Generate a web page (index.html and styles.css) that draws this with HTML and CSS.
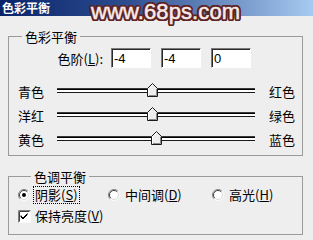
FILE: index.html
```html
<!DOCTYPE html>
<html>
<head>
<meta charset="utf-8">
<link rel="stylesheet" href="styles.css">
</head>
<body>
<div class="window">
  <div class="titlebar"><span class="title">色彩平衡</span></div>
  <div class="watermark">www.68ps.com</div>
  <div class="dialog">
    <fieldset class="group group-color">
      <legend>色彩平衡</legend>
      <div class="levels">
        <label class="levels-label">色阶(<u>L</u>):</label>
        <input class="field" type="text" value="-4">
        <input class="field" type="text" value="-4">
        <input class="field" type="text" value="0">
      </div>
      <div class="slider-row">
        <span class="lbl">青色</span>
        <div class="track"><span class="thumb" style="left:48%"><svg width="11" height="14" viewBox="0 0 11 14"><polygon points="0.5,5.5 5.5,0.5 10.5,5.5 10.5,13.5 0.5,13.5" fill="#ededed" stroke="#1a1a1a"/><polyline points="1.5,12.5 1.5,5.9 5.5,1.9" fill="none" stroke="#fff"/><polyline points="2,12.5 9.5,12.5 9.5,5.9" fill="none" stroke="#8a8a8a"/></svg></span></div>
        <span class="lbl">红色</span>
      </div>
      <div class="slider-row">
        <span class="lbl">洋红</span>
        <div class="track"><span class="thumb" style="left:48%"><svg width="11" height="14" viewBox="0 0 11 14"><polygon points="0.5,5.5 5.5,0.5 10.5,5.5 10.5,13.5 0.5,13.5" fill="#ededed" stroke="#1a1a1a"/><polyline points="1.5,12.5 1.5,5.9 5.5,1.9" fill="none" stroke="#fff"/><polyline points="2,12.5 9.5,12.5 9.5,5.9" fill="none" stroke="#8a8a8a"/></svg></span></div>
        <span class="lbl">绿色</span>
      </div>
      <div class="slider-row">
        <span class="lbl">黄色</span>
        <div class="track"><span class="thumb" style="left:50%"><svg width="11" height="14" viewBox="0 0 11 14"><polygon points="0.5,5.5 5.5,0.5 10.5,5.5 10.5,13.5 0.5,13.5" fill="#ededed" stroke="#1a1a1a"/><polyline points="1.5,12.5 1.5,5.9 5.5,1.9" fill="none" stroke="#fff"/><polyline points="2,12.5 9.5,12.5 9.5,5.9" fill="none" stroke="#8a8a8a"/></svg></span></div>
        <span class="lbl">蓝色</span>
      </div>
    </fieldset>

    <fieldset class="group group-tone">
      <legend>色调平衡</legend>
      <div class="radios">
        <label class="opt">
          <svg class="radio" width="12" height="12" viewBox="0 0 12 12"><circle cx="6" cy="6" r="5.5" fill="#fff"/><path d="M2.1,9.9 A5.5,5.5 0 0 1 9.9,2.1" fill="none" stroke="#808080"/><path d="M2.8,9.2 A4.5,4.5 0 0 1 9.2,2.8" fill="none" stroke="#404040"/><path d="M9.9,2.1 A5.5,5.5 0 0 1 2.1,9.9" fill="none" stroke="#fafafa"/><path d="M9.2,2.8 A4.5,4.5 0 0 1 2.8,9.2" fill="none" stroke="#d8d8d8"/><circle cx="6" cy="6" r="2" fill="#000"/></svg>
          <span class="focus">阴影(<u>S</u>)</span>
        </label>
        <label class="opt">
          <svg class="radio" width="12" height="12" viewBox="0 0 12 12"><circle cx="6" cy="6" r="5.5" fill="#fff"/><path d="M2.1,9.9 A5.5,5.5 0 0 1 9.9,2.1" fill="none" stroke="#808080"/><path d="M2.8,9.2 A4.5,4.5 0 0 1 9.2,2.8" fill="none" stroke="#404040"/><path d="M9.9,2.1 A5.5,5.5 0 0 1 2.1,9.9" fill="none" stroke="#fafafa"/><path d="M9.2,2.8 A4.5,4.5 0 0 1 2.8,9.2" fill="none" stroke="#d8d8d8"/></svg>
          <span class="txt">中间调(<u>D</u>)</span>
        </label>
        <label class="opt">
          <svg class="radio" width="12" height="12" viewBox="0 0 12 12"><circle cx="6" cy="6" r="5.5" fill="#fff"/><path d="M2.1,9.9 A5.5,5.5 0 0 1 9.9,2.1" fill="none" stroke="#808080"/><path d="M2.8,9.2 A4.5,4.5 0 0 1 9.2,2.8" fill="none" stroke="#404040"/><path d="M9.9,2.1 A5.5,5.5 0 0 1 2.1,9.9" fill="none" stroke="#fafafa"/><path d="M9.2,2.8 A4.5,4.5 0 0 1 2.8,9.2" fill="none" stroke="#d8d8d8"/></svg>
          <span class="txt">高光(<u>H</u>)</span>
        </label>
      </div>
      <label class="opt check-row">
        <svg class="check" width="13" height="13" viewBox="0 0 13 13"><rect x="0.5" y="0.5" width="12" height="12" fill="#fff" stroke="#fafafa"/><path d="M0.5,12.5 V0.5 H12.5" fill="none" stroke="#808080"/><path d="M1.5,11.5 V1.5 H11.5" fill="none" stroke="#404040"/><path d="M3,6 L5,8 L9.5,3.5 M3,7 L5,9 L9.5,4.5 M3,5.5 L3,7" fill="none" stroke="#000"/></svg>
        <span class="txt">保持亮度(<u>V</u>)</span>
      </label>
    </fieldset>
  </div>
</div>
</body>
</html>
```

FILE: styles.css
```css
html, body {
  margin: 0;
  padding: 0;
}
body {
  background: #eeeeee;
  font-family: "Noto Sans CJK SC", "Liberation Sans", sans-serif;
  font-size: 13px;
  color: #000;
  width: 313px;
  height: 240px;
  overflow: hidden;
}
.window {
  position: relative;
  height: 240px;
}
.titlebar {
  height: 16px;
  background: linear-gradient(to right, #0a246a 0%, #2c4c90 40%, #a6caf0 100%);
  display: flex;
  align-items: center;
  padding-left: 2px;
}
.title {
  color: #fff;
  font-weight: bold;
  font-size: 12px;
  line-height: 14px;
}
.watermark {
  position: absolute;
  left: 91px;
  top: 0;
  font-family: "Liberation Sans", Arial, sans-serif;
  font-size: 22px;
  line-height: 24px;
  letter-spacing: 0.1px;
  color: #f7eaea;
  -webkit-text-stroke: 0.5px #f7eaea;
  text-shadow:
    2px 0 0 #5e2424, -2px 0 0 #5e2424, 0 2px 0 #5e2424, 0 -2px 0 #5e2424,
    1.5px 1.5px 0 #5e2424, -1.5px 1.5px 0 #5e2424, 1.5px -1.5px 0 #5e2424, -1.5px -1.5px 0 #5e2424,
    2px 1px 0 #5e2424, -2px 1px 0 #5e2424, 2px -1px 0 #5e2424, -2px -1px 0 #5e2424,
    1px 2px 0 #5e2424, -1px 2px 0 #5e2424, 1px -2px 0 #5e2424, -1px -2px 0 #5e2424;
}
.dialog {
  padding: 13px 10px 0 8px;
  display: flex;
  flex-direction: column;
}
.group {
  margin: 0;
  border: 1px solid #9a9a9a;
  min-width: 0;
  width: 295px;
  box-sizing: border-box;
}
.group legend {
  margin-left: 13px;
  padding: 0 3px;
  line-height: 15px;
  font-size: 13px;
}
.group-color {
  padding: 4px 0 4px 0;
}
.levels {
  display: flex;
  align-items: center;
  height: 20px;
  gap: 10px;
  margin-bottom: 11px;
}
.levels-label {
  width: 94px;
  text-align: right;
  margin-right: -2px;
  line-height: 15px;
}
.field {
  box-sizing: border-box;
  width: 40px;
  height: 20px;
  margin: 0;
  padding: 0 2px;
  border-style: solid;
  border-width: 1px;
  border-color: #7a7a7a #ffffff #ffffff #7a7a7a;
  box-shadow: inset 1px 1px 0 #2a2a2a;
  background: #fff;
  font-family: "Liberation Sans", Arial, sans-serif;
  font-size: 13px;
  color: #000;
  outline: none;
}
.slider-row {
  display: grid;
  grid-template-columns: 39px 198px auto;
  align-items: center;
  height: 24px;
  padding-left: 9px;
}
.slider-row .lbl {
  line-height: 15px;
}
.slider-row .lbl:last-child {
  padding-left: 14px;
}
.track {
  position: relative;
  height: 3px;
  background: #fff;
  border-top: 1px solid #3a3a3a;
  border-bottom: 1px solid #1a1a1a;
  box-shadow: inset 0 1px 0 #000;
  margin-bottom: 1px;
}
.thumb {
  position: absolute;
  top: -6px;
  width: 11px;
  height: 14px;
  margin-left: -5px;
  display: block;
}
.thumb svg {
  display: block;
}
.group-tone {
  margin-top: 13px;
  padding: 3px 0 10px 9px;
}
.radios {
  display: grid;
  grid-template-columns: 90px 104px auto;
  height: 16px;
  align-items: center;
  margin-bottom: 5px;
}
.opt {
  display: flex;
  align-items: center;
  gap: 5px;
  line-height: 14px;
  height: 16px;
}
.radio, .check {
  display: block;
  flex: none;
}
.focus {
  outline: 1px dotted #000;
  padding: 1px 1px;
  margin-left: -1px;
}
.txt {
  line-height: 14px;
}
.check-row {
  gap: 4px;
}
u {
  text-decoration: underline;
  text-underline-offset: 1px;
}
```
